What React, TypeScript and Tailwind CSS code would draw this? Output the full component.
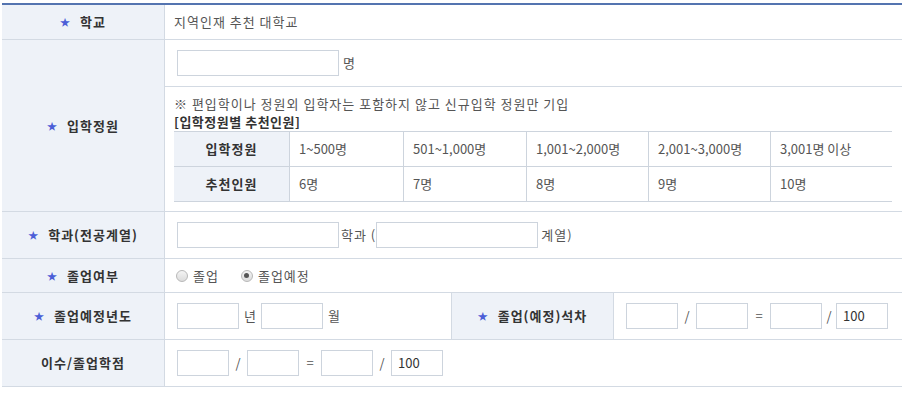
import React from 'react'

const font = { fontFamily: '"Noto Sans CJK KR", "Noto Sans", sans-serif' }

function Star() {
  return <span className="text-[10px] text-[#4c5fd7] mr-[9px] leading-none">★</span>
}

function Label({ star, children, className = '' }: { star?: boolean; children: React.ReactNode; className?: string }) {
  return (
    <div className={`w-[163px] shrink-0 bg-[#eef2f8] border-r border-[#d3dae3] flex items-center justify-center font-bold text-[#333] text-[13px] tracking-[1px] ${className}`}>
      {star && <Star />}
      <span>{children}</span>
    </div>
  )
}

function Box({ w, value }: { w: string; value?: string }) {
  return (
    <div className={`${w} h-[26px] border border-[#cdd4dd] bg-white flex items-center pl-[6px] text-[13px] text-[#333]`}>
      {value}
    </div>
  )
}

function Radio({ checked }: { checked?: boolean }) {
  return (
    <span className="w-[12px] h-[12px] rounded-full border border-[#b8b8b8] bg-gradient-to-b from-[#f4f4f4] to-[#dcdcdc] flex items-center justify-center">
      {checked && <span className="w-[5px] h-[5px] rounded-full bg-[#555]" />}
    </span>
  )
}

const COLS = ['1~500명', '501~1,000명', '1,001~2,000명', '2,001~3,000명', '3,001명 이상']
const RECS = ['6명', '7명', '8명', '9명', '10명']
const WIDTHS = ['w-[114px]', 'w-[123px]', 'w-[122px]', 'w-[122px]', 'w-[121px]']

export default function App() {
  return (
    <div className="bg-white w-[906px] h-[394px] pt-[3px] pl-[2px]" style={font}>
      <div className="w-[900px] border-t-2 border-[#5474b0] text-[13px] text-[#555]">
        {/* 학교 */}
        <div className="flex h-[35px] border-b border-[#d3dae3]">
          <Label star>학교</Label>
          <div className="flex items-center pl-[9px] tracking-[1px]">지역인재 추천 대학교</div>
        </div>

        {/* 입학정원 */}
        <div className="flex border-b border-[#d3dae3]">
          <Label star>입학정원</Label>
          <div className="flex-1">
            <div className="h-[47px] flex items-center pl-[12px] border-b border-[#d3dae3]">
              <Box w="w-[162px]" />
              <span className="ml-[4px]">명</span>
            </div>
            <div className="pt-[7px] pb-[9px] pl-[9px] pr-[10px]">
              <p className="leading-[19px] tracking-[1px]">※ 편입학이나 정원외 입학자는 포함하지 않고 신규입학 정원만 기입</p>
              <p className="leading-[18px] font-bold text-[#333] tracking-[0.5px]">[입학정원별 추천인원]</p>
              <div className="w-[718px] border-t border-[#cdd4dd]">
                <div className="flex h-[35px] border-b border-[#cdd4dd]">
                  <div className="w-[116px] bg-[#eef2f8] border-r border-[#cdd4dd] flex items-center justify-center font-bold text-[#333] tracking-[1px]">입학정원</div>
                  {COLS.map((c, i) => (
                    <div key={c} className={`${WIDTHS[i]} ${i < 4 ? 'border-r border-[#cdd4dd]' : ''} flex items-center pl-[9px]`}>{c}</div>
                  ))}
                </div>
                <div className="flex h-[35px] border-b border-[#cdd4dd]">
                  <div className="w-[116px] bg-[#eef2f8] border-r border-[#cdd4dd] flex items-center justify-center font-bold text-[#333] tracking-[1px]">추천인원</div>
                  {RECS.map((c, i) => (
                    <div key={c} className={`${WIDTHS[i]} ${i < 4 ? 'border-r border-[#cdd4dd]' : ''} flex items-center pl-[9px]`}>{c}</div>
                  ))}
                </div>
              </div>
            </div>
          </div>
        </div>

        {/* 학과 */}
        <div className="flex h-[47px] border-b border-[#d3dae3]">
          <Label star>학과(전공계열)</Label>
          <div className="flex items-center pl-[12px]">
            <Box w="w-[162px]" />
            <span className="ml-[2px] tracking-[1px]">학과 (</span>
            <Box w="w-[162px]" />
            <span className="ml-[3px] tracking-[1px]">계열)</span>
          </div>
        </div>

        {/* 졸업여부 */}
        <div className="flex h-[34px] border-b border-[#d3dae3]">
          <Label star>졸업여부</Label>
          <div className="flex items-center pl-[11px] tracking-[1px]">
            <Radio />
            <span className="ml-[5px]">졸업</span>
            <span className="ml-[22px]"><Radio checked /></span>
            <span className="ml-[5px]">졸업예정</span>
          </div>
        </div>

        {/* 졸업예정년도 */}
        <div className="flex h-[47px] border-b border-[#d3dae3]">
          <Label star>졸업예정년도</Label>
          <div className="w-[286px] flex items-center pl-[12px]">
            <Box w="w-[62px]" />
            <span className="w-[22px] text-center">년</span>
            <Box w="w-[62px]" />
            <span className="ml-[5px]">월</span>
          </div>
          <Label star className="border-l">졸업(예정)석차</Label>
          <div className="flex items-center pl-[12px]">
            <Box w="w-[52px]" />
            <span className="w-[18px] text-center">/</span>
            <Box w="w-[52px]" />
            <span className="w-[22px] text-center">=</span>
            <Box w="w-[52px]" />
            <span className="w-[14px] text-center">/</span>
            <Box w="w-[52px]" value="100" />
          </div>
        </div>

        {/* 이수/졸업학점 */}
        <div className="flex h-[47px] border-b border-[#d3dae3]">
          <Label>이수/졸업학점</Label>
          <div className="flex items-center pl-[12px]">
            <Box w="w-[52px]" />
            <span className="w-[18px] text-center">/</span>
            <Box w="w-[52px]" />
            <span className="w-[22px] text-center">=</span>
            <Box w="w-[52px]" />
            <span className="w-[18px] text-center">/</span>
            <Box w="w-[52px]" value="100" />
          </div>
        </div>
      </div>
    </div>
  )
}
